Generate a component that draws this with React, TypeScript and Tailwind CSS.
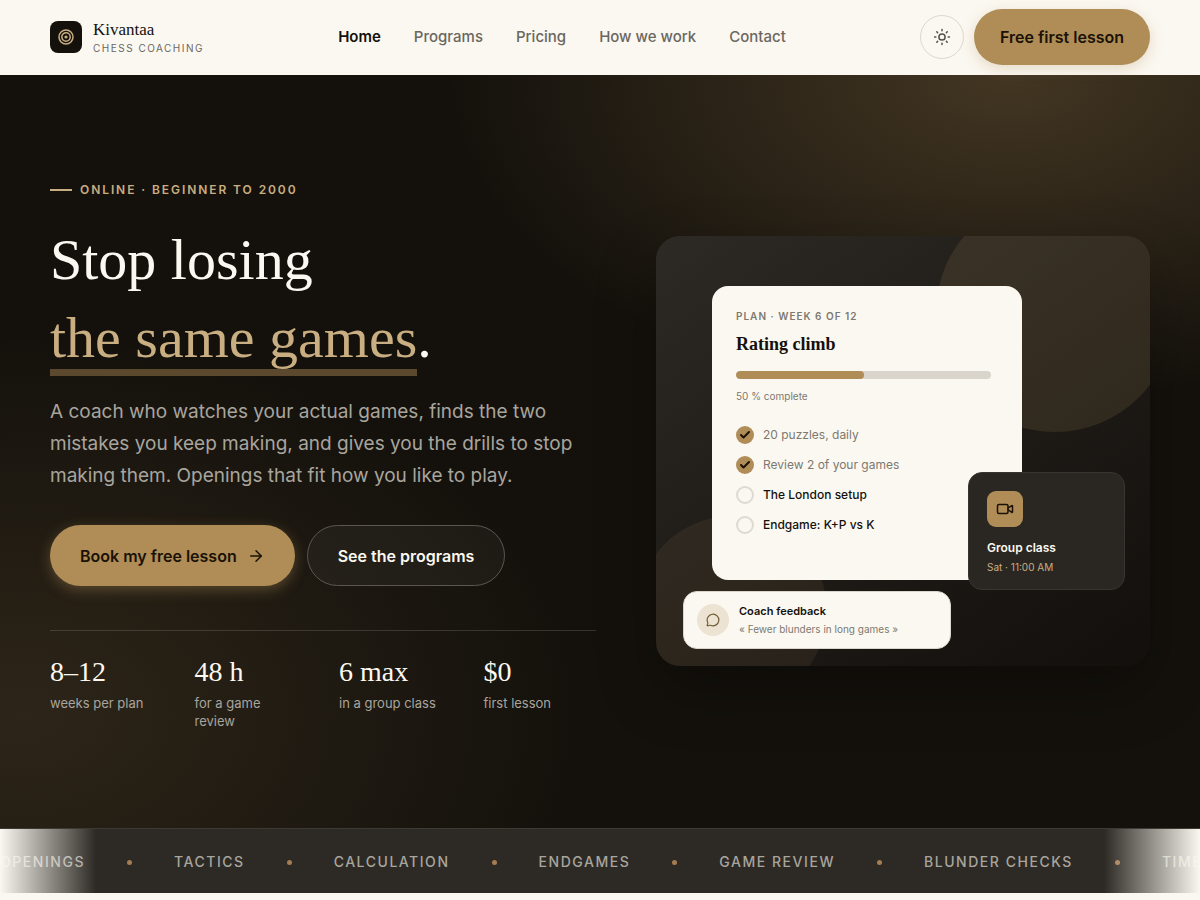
import { ArrowRight, Check, MessageCircle, Video } from "lucide-react";

const NAV = ["Home", "Programs", "Pricing", "How we work", "Contact"];

const STATS = [
  { value: "8–12", label: "weeks per plan" },
  { value: "48 h", label: "for a game review" },
  { value: "6 max", label: "in a group class" },
  { value: "$0", label: "first lesson" },
];

const TASKS = [
  { id: "puzzles", label: "20 puzzles, daily", done: true },
  { id: "review", label: "Review 2 of your games", done: true },
  { id: "london", label: "The London setup", done: false },
  { id: "endgame", label: "Endgame: K+P vs K", done: false },
];

const TOPICS = [
  "Openings",
  "Tactics",
  "Calculation",
  "Endgames",
  "Game review",
  "Blunder checks",
  "Time management",
];

function LogoMark() {
  return (
    <span className="flex size-8 items-center justify-center rounded-lg bg-[#14110c]">
      <svg viewBox="0 0 16 16" className="size-4" fill="none" stroke="#c9ae82" aria-hidden="true">
        <circle cx="8" cy="8" r="7" strokeWidth="1.5" />
        <circle cx="8" cy="8" r="4.2" strokeWidth="1.5" />
        <circle cx="8" cy="8" r="1.6" fill="#c9ae82" stroke="none" />
      </svg>
    </span>
  );
}

function SunIcon() {
  return (
    <svg viewBox="0 0 18 18" className="size-[18px]" fill="none" stroke="currentColor" strokeWidth="1.5" strokeLinecap="round" aria-hidden="true">
      <circle cx="9" cy="9" r="3.1" />
      <path d="M9 1.6v1.2M9 15.2v1.2M1.6 9h1.2M15.2 9h1.2M3.8 3.8l.8.8M13.4 13.4l.8.8M3.8 14.2l.8-.8M13.4 4.6l.8-.8" />
    </svg>
  );
}

function Header() {
  return (
    <header className="flex h-[75px] items-center justify-between border-b border-[#fbf8f1] bg-[#fbf8f1] px-[50px]">
      <a href="#" className="flex items-center gap-[11px]">
        <LogoMark />
        <span className="flex flex-col pt-0.5">
          <span className="font-['Liberation_Serif',serif] text-[17px] leading-5 text-[#14110c]">Kivantaa</span>
          <span className="text-[10px] leading-4 tracking-[0.15em] text-[#6b675f] uppercase">Chess coaching</span>
        </span>
      </a>
      <nav className="flex gap-[33px] text-[15px] font-medium">
        {NAV.map((item, i) => (
          <a key={item} href="#" className={i === 0 ? "font-semibold text-[#14110c]" : "text-[#6b675f]"}>
            {item}
          </a>
        ))}
      </nav>
      <div className="flex items-center gap-2.5">
        <button
          type="button"
          aria-label="Toggle theme"
          className="flex size-11 items-center justify-center rounded-full border border-[#dcd8d0] text-[#55514a]"
        >
          <SunIcon />
        </button>
        <button
          type="button"
          className="h-14 rounded-full bg-[#b08d57] px-[26px] text-base font-semibold text-[#1a1206] shadow-[0_4px_14px_rgba(176,141,87,0.28)]"
        >
          Free first lesson
        </button>
      </div>
    </header>
  );
}

function PlanCard() {
  return (
    <div className="absolute top-[50px] left-14 h-[294px] w-[310px] rounded-2xl bg-[#fbf8f1] px-6 pt-[22px] text-[#14110c]">
      <p className="text-[10px] leading-4 font-semibold tracking-[0.1em] text-[#7d7970] uppercase">Plan · Week 6 of 12</p>
      <h2 className="mt-2 font-['Liberation_Serif',serif] text-lg leading-6 font-bold">Rating climb</h2>
      <div className="mt-[15px] mr-[7px] h-2 overflow-hidden rounded-full bg-[#d9d5cd]">
        <div className="h-full w-1/2 rounded-full bg-[#b08d57]" />
      </div>
      <p className="mt-[9px] text-[10px] leading-4 text-[#7d7970]">50 % complete</p>
      <ul className="mt-[22px] flex flex-col gap-3">
        {TASKS.map((task) => (
          <li key={task.id} className="flex items-center gap-[9px]">
            <span className="relative flex size-[18px] shrink-0">
              <input
                id={task.id}
                type="checkbox"
                defaultChecked={task.done}
                className="peer size-[18px] appearance-none rounded-full border-2 border-[#dedad2] checked:border-0 checked:bg-[#b08d57]"
              />
              <Check
                className="pointer-events-none absolute inset-[3px] hidden size-3 text-[#1a1206] peer-checked:block"
                strokeWidth={4}
                aria-hidden="true"
              />
            </span>
            <label
              htmlFor={task.id}
              className={task.done ? "text-xs leading-[18px] text-[#7d7970]" : "text-xs leading-[18px] font-medium"}
            >
              {task.label}
            </label>
          </li>
        ))}
      </ul>
    </div>
  );
}

function GroupCard() {
  return (
    <div className="absolute right-[25px] bottom-[76px] w-[157px] rounded-[14px] border border-[#383530] bg-[#2a2722] px-[18px] pt-[18px] pb-3.5">
      <span className="flex size-9 items-center justify-center rounded-[9px] bg-[#b08d57] text-[#1a1206]">
        <Video className="size-[18px]" strokeWidth={2} aria-hidden="true" />
      </span>
      <p className="mt-[13px] text-xs leading-4 font-semibold text-[#fbf8f1]">Group class</p>
      <p className="mt-[3px] text-[10px] leading-4 text-[#c9ae82]">Sat · 11:00 AM</p>
    </div>
  );
}

function FeedbackCard() {
  return (
    <div className="absolute bottom-[17px] left-[27px] flex h-[58px] w-[268px] items-center gap-2.5 rounded-[14px] border border-[#d9d5cd] bg-[#fbf8f1] px-[13px]">
      <span className="flex size-8 items-center justify-center rounded-full bg-[#ede3d3] text-[#6e5a35]">
        <MessageCircle className="size-3.5" strokeWidth={2} aria-hidden="true" />
      </span>
      <div>
        <p className="text-[11px] leading-4 font-semibold text-[#14110c]">Coach feedback</p>
        <p className="mt-0.5 text-[10px] leading-4 text-[#7d7970]">« Fewer blunders in long games »</p>
      </div>
    </div>
  );
}

function Showcase() {
  return (
    <div className="relative h-[430px] overflow-hidden rounded-3xl bg-linear-145 from-[#2d2a25] to-[#120f0c] shadow-[0_24px_60px_rgba(0,0,0,0.28)]">
      <div className="absolute -top-[42px] left-[280px] size-[238px] rounded-full bg-[#b08d57]/15" />
      <div className="absolute -bottom-10 -left-[19px] size-[190px] rounded-full bg-[#8a6a4a]/14" />
      <PlanCard />
      <GroupCard />
      <FeedbackCard />
    </div>
  );
}

function Hero() {
  return (
    <section className="grid grid-cols-[1.05fr_0.95fr] items-center gap-[60px] bg-[#14110c] bg-[radial-gradient(560px_330px_at_84%_0%,rgba(176,141,87,0.3),transparent),radial-gradient(560px_380px_at_2%_85%,rgba(176,141,87,0.16),transparent)] px-[50px] pt-24 pb-[98px]">
      <div className="flex flex-col pt-2.5">
        <p className="flex items-center gap-2 text-xs leading-[18px] font-semibold tracking-[0.16em] text-[#c9ae82] uppercase">
          <span className="h-0.5 w-[22px] bg-[#c9ae82]" />
          Online · Beginner to 2000
        </p>
        <h1 className="mt-[22px] font-['Liberation_Serif',serif] text-[58px] leading-[78px] text-[#fbf8f1]">
          Stop losing
          <br />
          <span className="relative isolate inline-block text-[#c9ae82]">
            the same games
            <span className="absolute inset-x-0 bottom-px -z-10 h-[7px] bg-[#5c492d]" />
          </span>
          .
        </h1>
        <p className="mt-[19px] text-[19px] leading-8 text-[#a8a59e]">
          A coach who watches your actual games, finds the two mistakes you keep making, and gives you the drills to stop
          making them. Openings that fit how you like to play.
        </p>
        <div className="mt-[33px] flex gap-3">
          <button
            type="button"
            className="flex h-[61px] items-center gap-2.5 rounded-full bg-[#b08d57] px-[30px] text-base font-semibold text-[#1a1206] shadow-[0_4px_14px_rgba(176,141,87,0.4)]"
          >
            Book my free lesson
            <ArrowRight className="size-[18px]" strokeWidth={2} aria-hidden="true" />
          </button>
          <button
            type="button"
            className="h-[61px] rounded-full border border-[#5a5751] bg-white/4 px-[30px] text-base font-semibold text-[#fbf8f1]"
          >
            See the programs
          </button>
        </div>
        <dl className="mt-11 grid grid-cols-4 gap-8 border-t border-white/14 pt-6">
          {STATS.map((stat) => (
            <div key={stat.label} className="flex flex-col-reverse justify-end">
              <dt className="mt-[5px] pr-2 text-[13px] leading-[18px] text-[#a8a59e]">{stat.label}</dt>
              <dd className="font-['Liberation_Serif',serif] text-[28px] leading-[34px] text-[#fbf8f1]">{stat.value}</dd>
            </div>
          ))}
        </dl>
      </div>
      <Showcase />
    </section>
  );
}

function TopicStrip() {
  return (
    <div className="relative overflow-hidden border-t border-[#3d3a35] bg-[#2d2a25]">
      <ul className="flex h-16 items-center gap-[42px] pt-0.5">
        {TOPICS.map((topic) => (
          <li key={topic} className="flex shrink-0 items-center gap-[42px] text-sm font-medium tracking-[0.11em] text-[#a8a59e] uppercase">
            {topic}
            <span className="size-[5px] rounded-full bg-[#a67c52]" />
          </li>
        ))}
      </ul>
      <div className="absolute inset-y-0 left-0 w-24 bg-[linear-gradient(90deg,#fbf8f1,transparent)]" />
      <div className="absolute inset-y-0 right-0 w-24 bg-[linear-gradient(270deg,#fbf8f1,transparent)]" />
    </div>
  );
}

export default function App() {
  return (
    <div className="min-h-screen bg-[#fbf8f1] font-[Inter,sans-serif]">
      <Header />
      <main>
        <Hero />
        <TopicStrip />
      </main>
    </div>
  );
}
